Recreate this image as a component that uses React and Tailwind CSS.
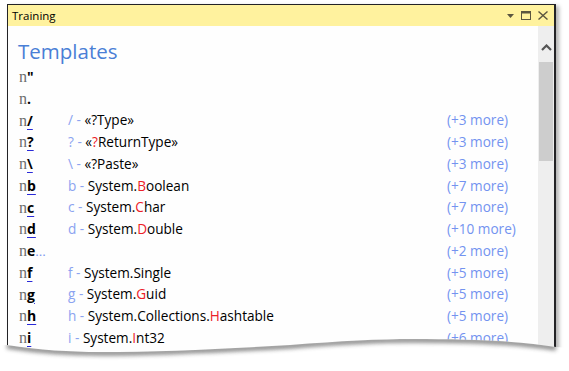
import React from 'react';

const rows = [
  { k: '"' },
  { k: '.' },
  { k: '/', u: true, p: '/', t: ['«?Type»'], m: 3 },
  { k: '?', u: true, p: '?', t: ['«', '?', 'ReturnType»'], m: 3 },
  { k: '\\', u: true, p: '\\', t: ['«?Paste»'], m: 3 },
  { k: 'b', u: true, p: 'b', t: ['System.', 'B', 'oolean'], m: 7 },
  { k: 'c', u: true, p: 'c', t: ['System.', 'C', 'har'], m: 7 },
  { k: 'd', u: true, p: 'd', t: ['System.', 'D', 'ouble'], m: 10 },
  { k: 'e', dots: true, m: 2 },
  { k: 'f', u: true, p: 'f', t: ['System.Single'], m: 5 },
  { k: 'g', u: true, p: 'g', t: ['System.', 'G', 'uid'], m: 5 },
  { k: 'h', u: true, p: 'h', t: ['System.Collections.', 'H', 'ashtable'], m: 5 },
  { k: 'i', u: true, p: 'i', t: ['System.', 'I', 'nt32'], m: 6 },
];

const Row = ({ row }) => (
  <div className="grid grid-cols-[49px_379px_auto] items-center h-[21.75px] whitespace-nowrap">
    <div className="flex items-baseline">
      <span className="font-['Liberation_Serif',serif] text-[16px] text-[#6c6c6c]">n</span>
      <span
        className={`font-bold text-[14px] text-black ${row.u ? 'underline decoration-[#2a2ad8] underline-offset-[3px]' : ''}`}
      >
        {row.k}
      </span>
      {row.dots && <span className="text-[13.5px] text-[#7f9bf0]">...</span>}
    </div>
    <div className="text-[13.6px]">
      {row.p && (
        <>
          <span className="text-[#8ba3f0]">{row.p} - </span>
          {row.t.map((s, i) => (
            <span key={i} className={i % 2 === 1 ? 'text-[#ec2028]' : 'text-black'}>
              {s}
            </span>
          ))}
        </>
      )}
    </div>
    <div className="text-[13.6px] text-[#7393f0]">{row.m ? `(+${row.m} more)` : ''}</div>
  </div>
);

export default function App() {
  return (
    <div className="relative w-[569px] h-[371px] overflow-hidden bg-white font-['Open_Sans',sans-serif]">
      <div className="ml-[7px] mt-[4px] w-[549px] h-[360px] flex flex-col border-t border-l border-r-2 border-[#232326] shadow-[3px_2px_4px_rgba(0,0,0,0.3)]">
        {/* Title bar */}
        <div className="h-[21px] bg-[#fff29e] flex items-center pl-[4px] pr-[6px]">
          <span className="text-[11.5px] text-black">Training</span>
          <div className="ml-auto flex items-center gap-[7px] text-[#5b5640]">
            <svg width="7" height="4" viewBox="0 0 7 4">
              <path d="M0 0 L7 0 L3.5 4 Z" fill="currentColor" />
            </svg>
            <svg width="10" height="9" viewBox="0 0 10 9">
              <rect x="0.5" y="0.5" width="9" height="8" fill="none" stroke="currentColor" />
              <rect x="0" y="0" width="10" height="2.5" fill="currentColor" />
            </svg>
            <svg width="10" height="9" viewBox="0 0 10 9">
              <path d="M0.5 0.5 L9.5 8.5 M9.5 0.5 L0.5 8.5" stroke="currentColor" strokeWidth="1.4" />
            </svg>
          </div>
        </div>

        {/* Body */}
        <div className="flex-1 flex bg-[#fefefe]">
          <div className="flex-1 pl-[11px] pt-[12px]">
            <div className="text-[20.5px] leading-[26px] text-[#4a7fd6] -ml-[1px]">Templates</div>
            <div className="mt-[1px]">
              {rows.map((row, i) => (
                <Row key={i} row={row} />
              ))}
            </div>
          </div>
          <div className="w-[16px] bg-[#eeeeee] flex flex-col items-center">
            <svg width="11" height="7" viewBox="0 0 11 7" className="mt-[18px]">
              <path d="M1 6 L5.5 1.5 L10 6" fill="none" stroke="#555" strokeWidth="2.2" />
            </svg>
            <div className="mt-[11px] w-[14px] h-[99px] bg-[#cdcdcd]" />
          </div>
        </div>
      </div>

      {/* torn bottom edge */}
      <svg className="absolute left-0 top-[325px]" width="569" height="46" viewBox="0 325 569 46">
        <defs>
          <clipPath id="below">
            <path d="M0,345 L7,345 C40,350 70,352 100,352 C160,352 220,349 290,345 C340,341 380,339 413,339 C470,339 520,341 556,347 L569,348 L569,371 L0,371 Z" />
          </clipPath>
          <filter id="blur" x="-10%" y="-100%" width="120%" height="300%">
            <feGaussianBlur stdDeviation="2.2" />
          </filter>
        </defs>
        <path
          d="M0,345 L7,345 C40,350 70,352 100,352 C160,352 220,349 290,345 C340,341 380,339 413,339 C470,339 520,341 556,347 L569,348 L569,371 L0,371 Z"
          fill="#ffffff"
        />
        <g clipPath="url(#below)">
          <path
            d="M7,346 C40,351 70,353 100,353 C160,353 220,350 290,346 C340,342 380,340 413,340 C470,340 520,342 556,348"
            fill="none"
            stroke="#6e6e6e"
            strokeWidth="5"
            filter="url(#blur)"
            opacity="0.85"
          />
        </g>
      </svg>
    </div>
  );
}
